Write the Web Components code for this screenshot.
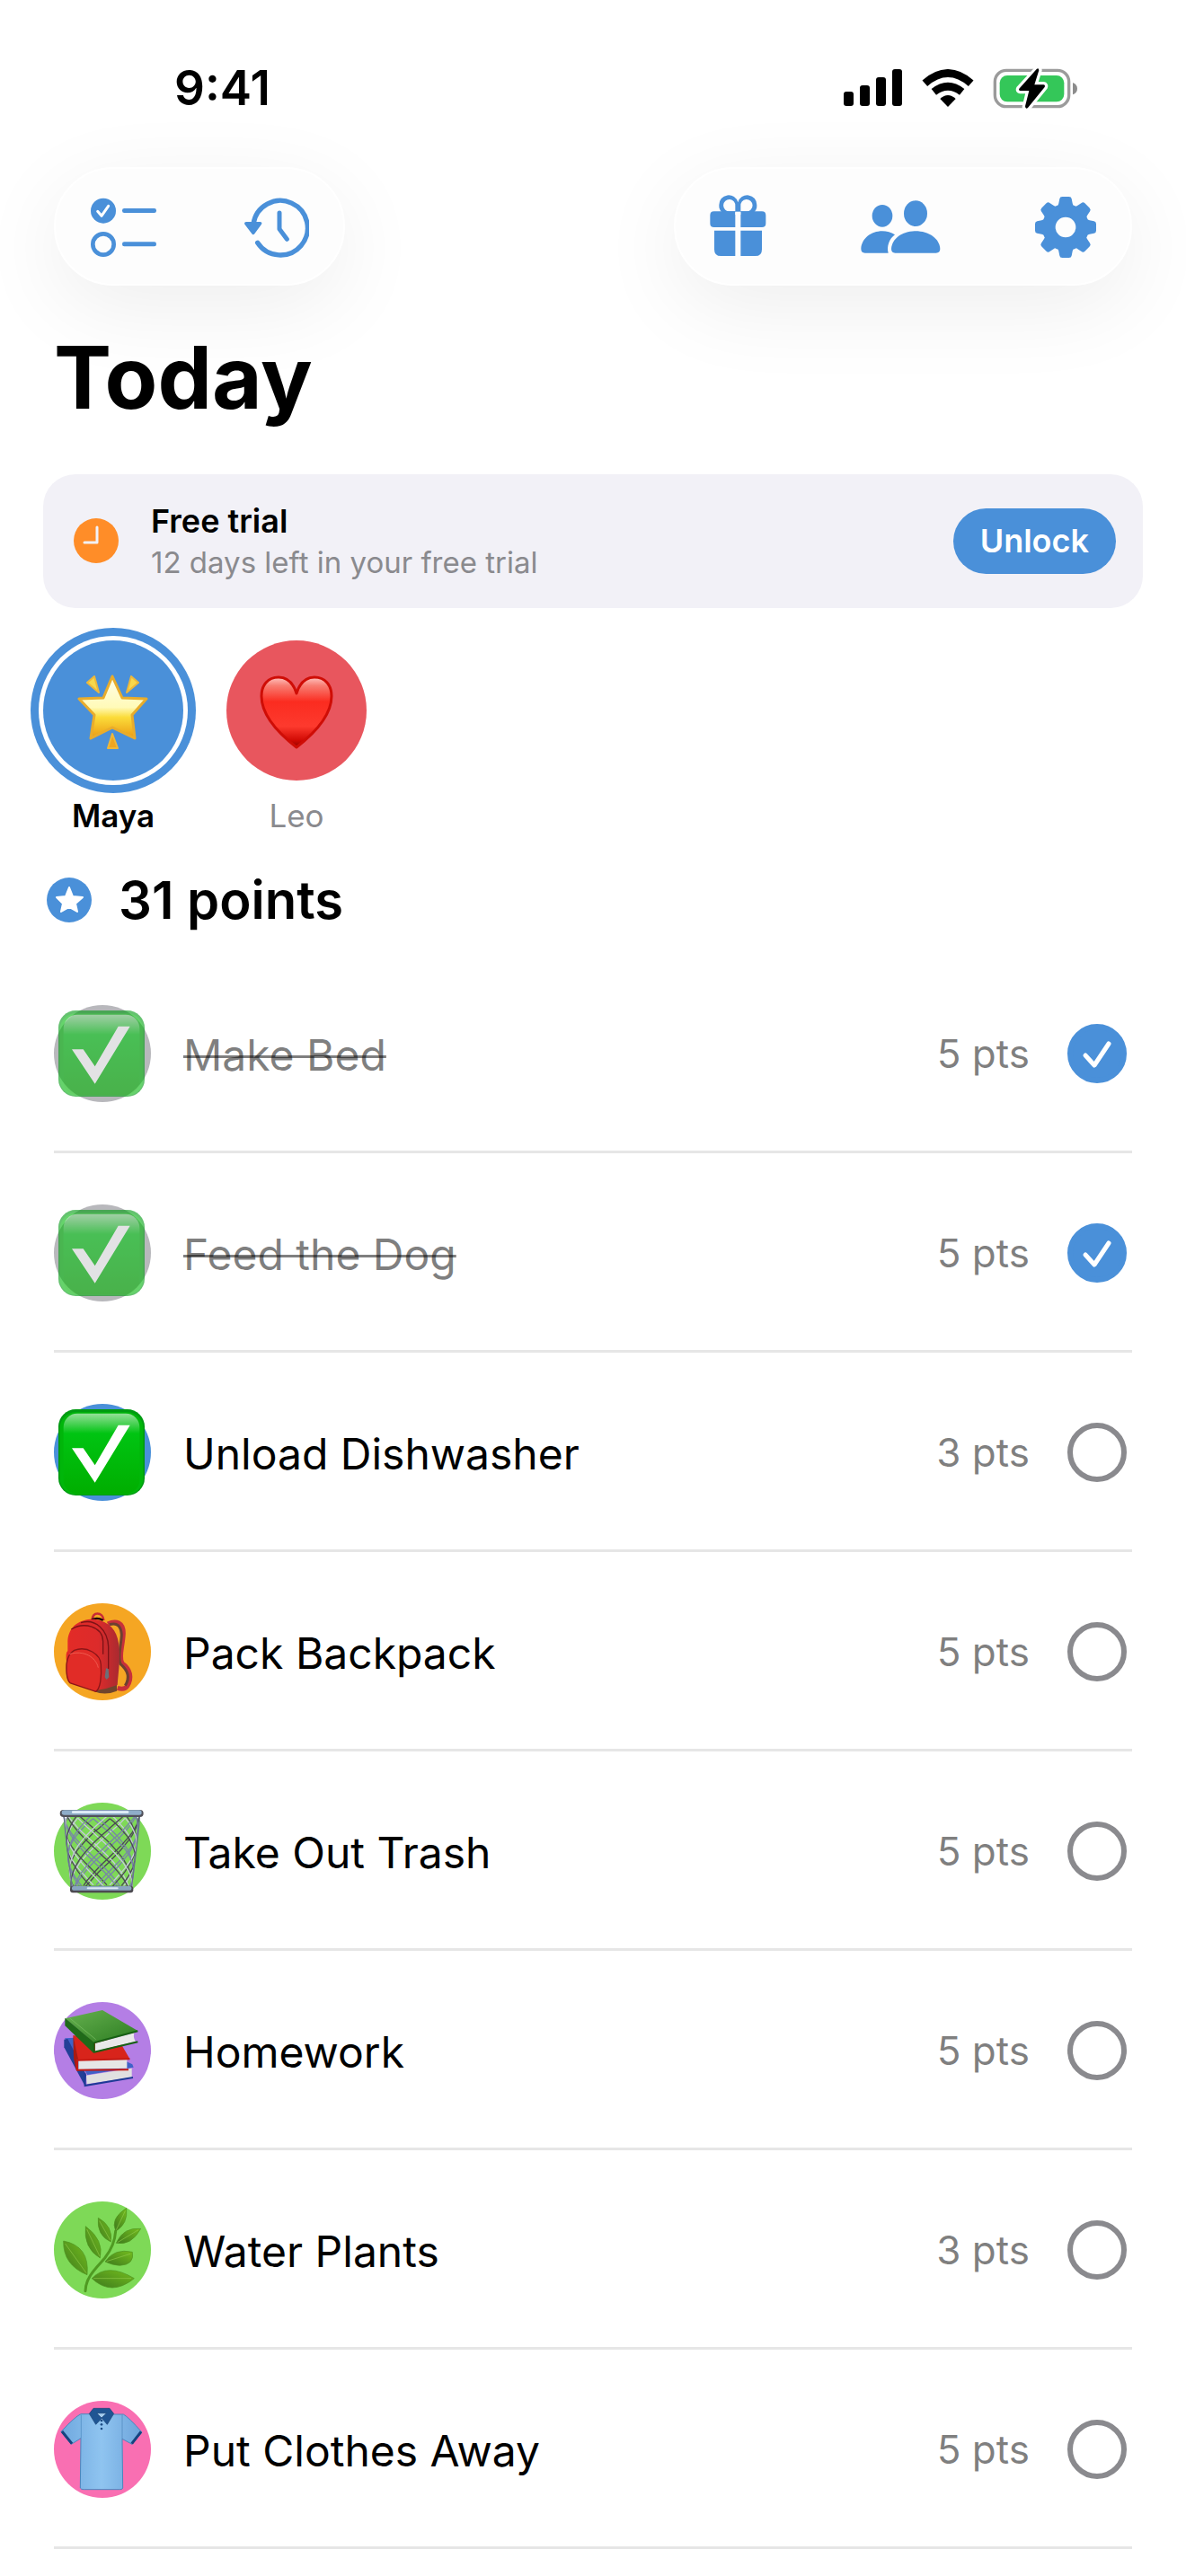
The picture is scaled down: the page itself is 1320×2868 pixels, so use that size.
<!DOCTYPE html>
<html lang="en">
<head>
<meta charset="utf-8">
<meta name="viewport" content="width=device-width">
<title>Today</title>
<style>
  body {
    margin: 0;
    background: #fff;
    color: #000;
    font-family: Inter, "Liberation Sans", sans-serif;
    --blue: #4a90d9;
    --grey: #8a8a8e;
  }
  main { padding: 0 48px; }
  h1 { margin: 42px 12px 48px; font-size: 96px; line-height: 120px; font-weight: 700; }
  nav { display: flex; justify-content: space-between; padding: 0 60px; }
  .profiles { display: flex; gap: 48px; margin: 36px 0; }
  .chores { margin: 24px 12px 0; }
</style>
</head>
<body>

<!-- drawings, one entry per name: viewBox and shapes -->
<script>
// wires of the basket: two sets of helices that run round a tapered cylinder
function wires() {
  let out = '';
  for (const dir of [1, -1]) {
    for (let k = 0; k < 14; k++) {
      let d = '';
      for (let i = 0; i <= 16; i++) {
        const t = i / 16;
        const a = k * Math.PI / 7 + dir * t * 2.2;
        const r = 126 - 24 * t;
        d += (i ? 'L' : 'M') + Math.round(219 + r * Math.cos(a)) + ' ' + Math.round(126 + 238 * t + 8 * Math.sin(a));
      }
      out += `<path d="${d}" stroke="${['#4b4856', '#7886a8', '#c3cbd6'][k % 3]}"/>`;
    }
  }
  return out;
}

const teeth = [0, 45, 90, 135, 180, 225, 270, 315].map(a =>
  `<path transform="rotate(${a} 1251 144)" d="M1219 78Q1227 74 1228 64L1231 49Q1232 42 1240 42H1262Q1270 42 1271 49L1274 64Q1275 74 1283 78Z"/>`).join('');

const ART = {
  signal: ['0 0 66 42', `<rect y="25" width="11" height="16" rx="3"/><rect x="18" y="18" width="11" height="23" rx="3"/>
    <rect x="36" y="9" width="11" height="32" rx="3"/><rect x="54" width="11" height="41" rx="3"/>`],
  wifi: ['314 45 174 126', `<g fill="none" stroke="#000" stroke-width="26">
    <path d="M324 92Q401 25 478 92"/><path d="M354 121Q401 84 448 121"/></g>
    <path d="M375 144Q401 120 427 144L401 171Z"/>`],
  battery: ['552 39 285 141', `<rect x="559" y="49" width="247" height="121" rx="38" fill="none" stroke="#9b9b9b" stroke-width="10"/>
    <path d="M819 90Q834 96 834 110T819 130Z" fill="#8c8c8c"/>
    <rect x="575" y="66" width="215" height="88" rx="25" fill="#34c759"/>
    <path d="M702 43L640 110Q637 116 644 117H673L660 171Q661 180 669 174L725 105Q728 98 721 97H691L706 49Q706 41 702 43Z" stroke="#fff" stroke-width="20" stroke-linejoin="round" fill="#fff"/>
    <path d="M698 45L640 110Q637 116 644 117H673L660 169Q661 180 669 174L725 105Q728 98 721 97H691L706 49Q705 39 698 45Z"/>`],
  list: ['60 0 222 252', `<circle cx="105" cy="74" r="42"/><path d="M86 76L99 91L122 58" fill="none" stroke="#fff" stroke-width="9" stroke-linecap="round" stroke-linejoin="round"/>
    <circle cx="105" cy="186" r="35" fill="none" stroke="currentColor" stroke-width="14"/>
    <rect x="168" y="66" width="114" height="15" rx="7"/><rect x="168" y="178" width="114" height="15" rx="7"/>`],
  history: ['574 0 216 252', `<g fill="none" stroke="currentColor" stroke-width="16" stroke-linecap="round" stroke-linejoin="round">
    <path d="M604 118A91 91 0 1 1 618 181"/><path d="M691 81V135L716 169" stroke-width="15"/></g>
    <path d="M580 111H627Q635 112 631 119L608 151Q603 157 599 151L575 119Q572 112 580 111Z"/>`],
  gift: ['62 15 189 252', `<path fill-rule="evenodd" d="M102 94Q92 84 93 70A32 32 0 0 1 156 61A32 32 0 0 1 219 70Q220 84 210 94Z
      M147 91V74A20 20 0 1 0 128 91ZM165 91V74A20 20 0 1 1 184 91Z"/>
    <path d="M147 91V144H76Q63 144 63 131V104Q63 91 76 91ZM165 91V144H236Q249 144 249 131V104Q249 91 236 91Z"/>
    <path d="M77 155H147V240H99Q77 240 77 218ZM165 155H236V218Q236 240 214 240H165Z"/>
    <rect x="147" y="92" width="18" height="10" fill="#fdfdfd"/>`],
  people: ['569 15 267 252', `<ellipse cx="641" cy="106" rx="34" ry="37"/><ellipse cx="752" cy="98" rx="39" ry="43"/>
    <path d="M684 230Q671 230 671 216C673 182 708 157 752 157S832 182 834 216Q834 230 820 230Z"/>
    <path d="M583 230Q570 230 570 216C572 182 603 157 641 157Q664 157 683 169C664 183 655 208 661 230Z"/>`],
  gear: ['1149 15 204 252', `<circle cx="1251" cy="144" r="56" fill="none" stroke="currentColor" stroke-width="44"/>${teeth}`],
  clock: ['0 0 51 51', `<circle cx="25" cy="25" r="25" fill="#ff8d28"/><path d="M26 10V27H12" fill="none" stroke="#f2f1f7" stroke-width="3" stroke-linecap="round" stroke-linejoin="round"/>`],
  points: ['0 0 51 51', `<circle cx="25" cy="25" r="25"/><path fill="#fff" stroke="#fff" stroke-width="2" stroke-linejoin="round" d="M25 11L29 21L40 22L32 29L34 38L25 33L16 38L18 29L11 22L21 21Z"/>`],
  tick: ['0 0 66 66', `<path d="M20 35L30 46L46 22" fill="none" stroke="#fff" stroke-width="5" stroke-linecap="round" stroke-linejoin="round"/>`],

  star: ['0 0 156 156', `<defs><linearGradient id="s" x2="0" y2="1"><stop offset=".1" stop-color="#fffde0"/><stop offset=".5" stop-color="#fffab8"/><stop offset=".66" stop-color="#fbdc3a"/><stop offset="1" stop-color="#eb9a12"/></linearGradient></defs>
    <g stroke="#eeb83a" stroke-width="2" stroke-linejoin="round"><path fill="#f8d84c" d="M49 47L57 40L62 58ZM106 47L98 40L93 58Z"/><path fill="#efa520" d="M77 104L72 120H83Z"/>
    <path fill="url(#s)" stroke="#e8ac2c" stroke-width="3" d="M77 40L88 64L115 65L99 83L102 109L77 97L53 109L57 83L40 65L67 64Z"/></g>`],
  heart: ['0 0 156 156', `<defs><linearGradient id="h" x2="0" y2="1"><stop offset="0" stop-color="#ffc4c0"/><stop offset=".12" stop-color="#f87d72"/><stop offset=".35" stop-color="#fb2c20"/><stop offset=".7" stop-color="#fd3a2e"/><stop offset=".9" stop-color="#d10a04"/><stop offset="1" stop-color="#8e0400"/></linearGradient></defs>
    <path fill="url(#h)" stroke="#cf0d06" stroke-width="3" stroke-linejoin="round" d="M78 59C74 46 67 41 58 41C46 41 39 50 39 62C39 84 60 105 78 119C96 105 117 84 117 62C117 50 110 41 98 41C89 41 82 46 78 59Z"/>`],
  check: ['0 0 324 324', `<defs><linearGradient id="g" x2="0" y2="1"><stop offset="0" stop-color="#95df99"/><stop offset=".25" stop-color="#00c412"/><stop offset="1" stop-color="#00ae00"/></linearGradient></defs>
    <rect x="15" y="18" width="288" height="288" rx="58" fill="#009a12"/><rect x="20" y="28" width="278" height="274" rx="52" fill="#00b60a"/>
    <rect x="32" y="32" width="254" height="268" rx="46" fill="url(#g)"/>
    <path fill="#fff" d="M60 148H98L137 205L215 71H254L137 263Z"/>`],
  backpack: ['60 735 324 324', `<defs><linearGradient id="b"><stop offset="0" stop-color="#e32b27"/><stop offset=".6" stop-color="#dc2b2b"/><stop offset="1" stop-color="#a92a30"/></linearGradient></defs>
    <path d="M240 804C268 790 292 800 292 835C290 880 275 915 288 935C316 955 322 985 305 1012C298 1022 285 1022 272 1018" fill="none" stroke="#c8303a" stroke-width="15"/>
    <path d="M246 806C272 798 284 812 286 840C284 880 272 915 282 938C308 960 314 985 298 1010" fill="none" stroke="#6d4030" stroke-width="9"/>
    <path d="M188 792C186 762 224 762 226 792" fill="none" stroke="#c92a35" stroke-width="8"/><path d="M186 790Q205 780 224 792" stroke="#1c0505" stroke-width="7" fill="none"/>
    <path fill="#70452c" d="M180 1020L270 1000V1028Q232 1044 195 1030Z"/>
    <path fill="url(#b)" d="M106 860C110 808 150 786 196 788C245 795 270 825 276 868C283 915 276 960 272 1008Q235 1022 200 1026L112 1000Q98 990 102 930Q98 900 106 894Z"/>
    <path d="M150 800C200 785 240 825 242 880V955M118 822C160 796 222 812 224 862V905" fill="none" stroke="#7d1216" stroke-width="4"/>
    <path d="M128 892C170 876 216 905 217 940C220 980 215 1020 200 1030L115 1002Q100 990 102 940Q105 905 128 892Z" fill="#e12c27" stroke="#8b1518" stroke-width="4"/>
    <path d="M112 905C160 890 200 915 208 950" fill="none" stroke="#f05b50" stroke-width="3"/><path d="M234 952L242 954L244 982L236 990L230 982Z" fill="#6c7078"/>`],
  basket: ['60 81 324 324', `<g fill="none" stroke-width="4">${wires()}<path stroke="#66728c" d="M94 128C98 200 112 290 121 364M346 128C342 200 328 290 319 364"/></g>
    <rect x="80" y="105" width="279" height="24" rx="12" fill="#51515a"/><rect x="86" y="106" width="267" height="16" rx="8" fill="#8fadc9"/><rect x="120" y="109" width="190" height="7" rx="3" fill="#e8f3fb"/>
    <rect x="114" y="359" width="211" height="23" rx="9" fill="#4c4a50"/><rect x="120" y="360" width="199" height="14" rx="6" fill="#88a5c0"/><rect x="170" y="364" width="105" height="6" rx="3" fill="#dce9f3"/>`],
  books: ['60 747 324 324', `<defs><linearGradient id="k" y2="1"><stop offset="0" stop-color="#66b14f"/><stop offset="1" stop-color="#2c7c21"/></linearGradient></defs>
    <path fill="#3f62c8" d="M96 868L130 866L322 955L326 965L172 990Z"/><path fill="#223f96" d="M94 872L106 870L168 990L165 1030L94 898Z"/>
    <path fill="#e0e0e0" d="M168 992L320 968V998L170 1021Z"/><path d="M163 984L164 1026L324 999" fill="none" stroke="#1e3a96" stroke-width="6"/>
    <path fill="#d8241b" d="M124 858L280 880L314 938L140 941Z"/><path fill="#a91a12" d="M124 858L142 942L134 975L126 935Z"/>
    <path fill="#e6e6e6" d="M142 941L304 939V968L142 972Z"/><path d="M138 938V974L309 973M138 941L313 937" fill="none" stroke="#c51a13" stroke-width="6"/>
    <path fill="url(#k)" d="M98 802L222 774L340 843L193 883Z"/><path fill="#1f6a19" d="M97 800L194 882L192 917L97 826Z"/>
    <path fill="#e9e9e9" d="M198 884L328 850Q324 866 332 878L198 912Z"/><path d="M194 882V914L340 880M194 883L340 844" fill="none" stroke="#176113" stroke-width="6" stroke-linejoin="round"/>
    <path d="M112 800L200 872" stroke="#7dc165" stroke-width="2"/>`],
  herb: ['60 93 324 324', `<defs><linearGradient id="l" x1="1" x2="0" y2="1"><stop offset="0" stop-color="#74bd1d"/><stop offset="1" stop-color="#3d7a1e"/></linearGradient></defs>
    <path d="M165 392C166 345 202 315 230 282C255 250 264 225 266 192" fill="none" stroke="#4f9a22" stroke-width="9" stroke-linecap="round"/>
    <g fill="url(#l)" stroke="#4d9220" stroke-width="2"><path d="M302 115Q308 168 267 192Q246 152 302 115Z"/><path d="M208 148Q258 176 250 228Q202 206 208 148Z"/><path d="M350 184Q318 242 268 232Q292 178 350 184Z"/>
    <path d="M166 176Q228 222 214 282Q158 248 166 176Z"/><path d="M231 294Q262 248 322 262Q330 304 280 307Q255 306 231 294Z"/><path d="M92 225Q180 242 171 338Q90 305 92 225Z"/><path d="M187 350Q238 296 328 350Q252 412 187 350Z"/></g>
    <path d="M298 125L268 188M212 158L248 222M342 188L272 230M170 186L213 276M315 268L236 293M98 234L168 332M318 350H192" stroke="#8fc94a" stroke-width="2" fill="none"/>`],
  shirt: ['60 759 324 324', `<defs><linearGradient id="t"><stop offset="0" stop-color="#6fa8de"/><stop offset=".5" stop-color="#8fc4f0"/><stop offset="1" stop-color="#6ca3da"/></linearGradient></defs>
    <path fill="url(#t)" stroke="#4b86bd" stroke-width="3" stroke-linejoin="round" d="M180 803H150Q130 812 84 862L118 904L150 884L148 1050Q150 1055 160 1055H280Q290 1055 290 1050L288 886L321 904L354 864Q310 814 292 804H260Z"/>
    <path fill="none" stroke="#4b86bd" stroke-width="2" d="M151 806V884M288 806V886"/>
    <path fill="none" stroke="#16437f" stroke-width="9" d="M87 861L120 902M351 862L320 902"/>
    <path fill="#a5cdee" d="M196 798H242L219 824Z"/><path fill="#1f5593" stroke="#173f74" stroke-width="2" stroke-linejoin="round" d="M192 784H246L260 802L238 838L220 817L200 838L178 802ZM203 800L219 816L236 800Z" fill-rule="evenodd"/>
    <g fill="#1c4c85"><circle cx="219" cy="825" r="4"/><circle cx="219" cy="838" r="4"/><circle cx="219" cy="852" r="4"/></g>`]
};

customElements.define('art-icon', class extends HTMLElement {
  connectedCallback() {
    const [box, body] = ART[this.getAttribute('name')];
    this.attachShadow({mode: 'open'});
    this.shadowRoot.innerHTML = `
      <style>
        :host { display: block; flex: none; }
        svg { display: block; width: 100%; height: 100%; }
      </style>
      <svg viewBox="${box}" fill="currentColor" aria-hidden="true">${body}</svg>`;
  }
});
</script>

<!-- status bar -->
<script>
customElements.define('status-bar', class extends HTMLElement {
  connectedCallback() {
    this.attachShadow({mode: 'open'});
    this.shadowRoot.innerHTML = `
      <style>
        :host { display: flex; justify-content: space-between; align-items: center; padding: 62px 120px 52px 194px; }
        time { font-size: 53px; line-height: 72px; font-weight: 600; }
        div { display: flex; align-items: center; gap: 21px; }
        .signal { width: 66px; height: 42px; }
        .wifi { width: 58px; height: 42px; }
        .battery { width: 95px; height: 47px; }
      </style>
      <time><slot></slot></time>
      <div>
        <art-icon class="signal" name="signal"></art-icon>
        <art-icon class="wifi" name="wifi"></art-icon>
        <art-icon class="battery" name="battery"></art-icon>
      </div>`;
  }
});
</script>

<!-- toolbar: capsule and its buttons -->
<script>
customElements.define('tool-group', class extends HTMLElement {
  connectedCallback() {
    this.attachShadow({mode: 'open'});
    this.shadowRoot.innerHTML = `
      <style>
        :host {
          display: flex; align-items: center; box-sizing: border-box;
          height: 132px; padding: 0 38px; gap: var(--gap, 98px);
          border: 2px solid #fff; border-radius: 66px;
          background: #fdfdfd; box-shadow: 0 24px 96px rgba(0, 0, 0, .07);
        }
      </style>
      <slot></slot>`;
  }
});

customElements.define('tool-button', class extends HTMLElement {
  connectedCallback() {
    this.attachShadow({mode: 'open'});
    this.shadowRoot.innerHTML = `
      <style>
        :host { display: block; }
        button { display: block; margin: 0; padding: 0; border: 0; background: none; color: var(--blue); cursor: pointer; }
        art-icon { width: ${this.getAttribute('width')}px; height: 84px; }
      </style>
      <button aria-label="${this.getAttribute('label')}"><art-icon name="${this.getAttribute('icon')}"></art-icon></button>`;
  }
});
</script>

<!-- free trial banner -->
<script>
customElements.define('trial-banner', class extends HTMLElement {
  connectedCallback() {
    this.attachShadow({mode: 'open'});
    this.shadowRoot.innerHTML = `
      <style>
        :host { display: flex; align-items: center; padding: 28px 30px 29px 34px; border-radius: 36px; background: #f2f1f7; }
        art-icon { width: 51px; height: 51px; }
        .text { flex: 1; padding-left: 35px; }
        .title { font-size: 36px; line-height: 48px; font-weight: 600; }
        .note { font-size: 33px; line-height: 44px; color: var(--grey); }
        button {
          margin: 0; padding: 0 30px; border: 0; border-radius: 37px; background: var(--blue); color: #fff;
          font: 600 36px/73px Inter, "Liberation Sans", sans-serif; cursor: pointer;
        }
      </style>
      <art-icon name="clock"></art-icon>
      <div class="text">
        <div class="title"><slot name="title"></slot></div>
        <div class="note"><slot></slot></div>
      </div>
      <button><slot name="action"></slot></button>`;
  }
});
</script>

<!-- child profile -->
<script>
customElements.define('profile-chip', class extends HTMLElement {
  connectedCallback() {
    this.attachShadow({mode: 'open'});
    this.shadowRoot.innerHTML = `
      <style>
        :host { display: block; }
        button {
          display: flex; flex-direction: column; align-items: center; gap: 17px;
          margin: 0; padding: 0; border: 0; background: none; color: var(--grey);
          font: 400 35px/44px Inter, "Liberation Sans", sans-serif; cursor: pointer;
        }
        art-icon { width: 156px; height: 156px; border-radius: 50%; background: ${this.getAttribute('color')}; }
        :host([selected]) button { color: #000; font-weight: 600; }
        :host([selected]) art-icon { box-shadow: 0 0 0 5px #fff, 0 0 0 14px ${this.getAttribute('color')}; }
      </style>
      <button aria-pressed="${this.hasAttribute('selected')}">
        <art-icon name="${this.getAttribute('icon')}"></art-icon>
        <span><slot></slot></span>
      </button>`;
  }
});

customElements.define('points-total', class extends HTMLElement {
  connectedCallback() {
    this.attachShadow({mode: 'open'});
    this.shadowRoot.innerHTML = `
      <style>
        :host { display: flex; align-items: center; gap: 29px; padding-left: 4px; font-size: 58px; line-height: 72px; font-weight: 600; }
        art-icon { width: 51px; height: 51px; color: var(--blue); }
      </style>
      <art-icon name="points"></art-icon>
      <span><slot></slot></span>`;
  }
});
</script>

<!-- one chore -->
<script>
customElements.define('chore-row', class extends HTMLElement {
  connectedCallback() {
    const done = this.hasAttribute('done');
    this.attachShadow({mode: 'open'});
    this.shadowRoot.innerHTML = `
      <style>
        :host { display: flex; align-items: center; padding: 57px 6px 54px 0; border-bottom: 3px solid #e6e6e6; }
        .badge { flex: none; border-radius: 50%; background: ${done ? '#b8b8bc' : this.getAttribute('color')}; }
        .badge art-icon { width: 108px; height: 108px; }
        label { flex: 1; padding: 3px 0 0 36px; font-size: 48px; line-height: 60px; }
        .points { padding: 0 42px; font-size: 44px; line-height: 60px; color: rgba(0, 0, 0, .5); }
        .tick { display: grid; flex: none; }
        .tick > * { grid-area: 1 / 1; width: 66px; height: 66px; }
        .tick art-icon { visibility: hidden; pointer-events: none; }
        input { appearance: none; box-sizing: border-box; margin: 0; border: 6px solid var(--grey); border-radius: 50%; cursor: pointer; }
        input:checked { border-color: var(--blue); background: var(--blue); }
        input:checked + art-icon { visibility: visible; }
        :host([done]) .badge art-icon { opacity: .6; }
        :host([done]) label { color: rgba(0, 0, 0, .5); text-decoration: line-through 3px; text-decoration-skip-ink: none; }
      </style>
      <div class="badge"><art-icon name="${this.getAttribute('icon')}"></art-icon></div>
      <label for="done"><slot></slot></label>
      <span class="points">${this.getAttribute('points')} pts</span>
      <span class="tick">
        <input type="checkbox" id="done" ${done ? 'checked' : ''}>
        <art-icon name="tick"></art-icon>
      </span>`;
  }
});
</script>

<status-bar>9:41</status-bar>

<nav>
  <tool-group>
    <tool-button icon="list" label="Chores" width="74"></tool-button>
    <tool-button icon="history" label="History" width="72"></tool-button>
  </tool-group>
  <tool-group style="--gap: 105px">
    <tool-button icon="gift" label="Rewards" width="63"></tool-button>
    <tool-button icon="people" label="Family" width="89"></tool-button>
    <tool-button icon="gear" label="Settings" width="68"></tool-button>
  </tool-group>
</nav>

<main>
  <h1>Today</h1>

  <trial-banner>
    <span slot="title">Free trial</span>
    12 days left in your free trial
    <span slot="action">Unlock</span>
  </trial-banner>

  <div class="profiles">
    <profile-chip icon="star" color="#4a90d9" selected>Maya</profile-chip>
    <profile-chip icon="heart" color="#e8565e">Leo</profile-chip>
  </div>

  <points-total>31 points</points-total>

  <div class="chores">
    <chore-row icon="check" points="5" done>Make Bed</chore-row>
    <chore-row icon="check" points="5" done>Feed the Dog</chore-row>
    <chore-row icon="check" points="3" color="#4a90d9">Unload Dishwasher</chore-row>
    <chore-row icon="backpack" points="5" color="#f5a623">Pack Backpack</chore-row>
    <chore-row icon="basket" points="5" color="#7ed957">Take Out Trash</chore-row>
    <chore-row icon="books" points="5" color="#b47ee5">Homework</chore-row>
    <chore-row icon="herb" points="3" color="#7ed957">Water Plants</chore-row>
    <chore-row icon="shirt" points="5" color="#f96fb2">Put Clothes Away</chore-row>
  </div>
</main>

</body>
</html>
